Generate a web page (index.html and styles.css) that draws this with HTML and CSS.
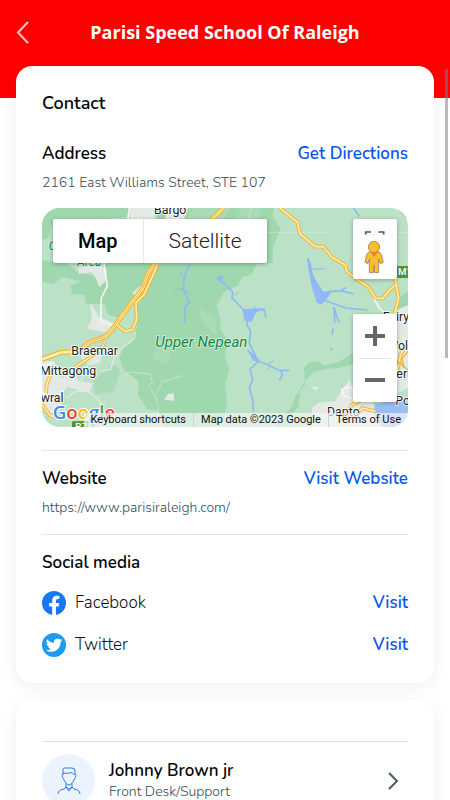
FILE: index.html
```html
<!DOCTYPE html>
<html lang="en">
<head>
<meta charset="utf-8">
<meta name="viewport" content="width=device-width, initial-scale=1">
<title>Parisi Speed School Of Raleigh</title>
<link rel="stylesheet" href="styles.css">
</head>
<body>
<div class="app">
  <header class="topbar">
    <button class="back" type="button" aria-label="Back">
      <svg width="14" height="24" viewBox="0 0 14 24" fill="none" stroke="currentColor" stroke-width="2"><path d="M12 2 2 12.500l10 10.500"/></svg>
    </button>
    <h1 class="title">Parisi Speed School Of Raleigh</h1>
  </header>
  <main class="content">
    <section class="card contact">
      <h2 class="heading contact-title">Contact</h2>
      <div class="row">
        <h3 class="heading">Address</h3>
        <a class="action" href="#directions">Get Directions</a>
      </div>
      <p class="detail">2161 East Williams Street, STE 107</p>

      <div class="map">
        <svg class="map-art" viewBox="0 0 1098 657" preserveAspectRatio="xMidYMid slice" aria-hidden="true">
          <rect width="1098" height="657" fill="#bbe2c6"/>
          <g fill="#9fd7ae">
            <path d="M0 0H270L250 28 120 36 104 70 28 52 18 92 0 96ZM0 158H64L104 190 160 206 176 178 200 160H340L300 230 270 268 230 330 196 318 190 290 130 286 128 262 90 258 86 232 118 220 60 208 34 228 0 222Z"/>
            <path d="M345 0H696L692 24 716 62 694 112 692 164 644 168 628 200 600 208 588 232 548 250 524 290 534 330 536 364 558 400 548 444 562 486 548 530 556 580 540 657H368L350 610 316 604 288 560 290 520 246 486 232 450 244 420 274 400 286 350 276 320 300 270 344 160Z"/>
            <path d="M786 480 800 464 826 460 846 472 890 462 940 430V466L900 478 850 484 816 490 794 512 774 544 770 596 746 620 742 657H700L722 620 748 600 760 564 790 530Z"/>
            <path d="M1098 250 1070 270 1064 318 1098 300ZM1064 0h34v40Z"/>
          </g>
          <g fill="#aadbb7">
            <path d="M460 0H560L530 34H430ZM600 0h60l-10 34h-70Z"/>
            <path d="M350 390l40 20-10 60-50-20ZM470 300l50 30 4 50-40-30Z"/>
            <path d="M210 470 236 482 216 550 160 562 154 520Z"/>
          </g>
          <g fill="#e3e9e5">
            <path d="M144 290h6l20 36 46 20-18 28-62-12 14-30ZM108 180l60-18 26 24-4 34-18 18-10-26-12-20-40 6ZM270 256l24-22 12 8-16 26ZM366 576l12-18 18-2v22ZM806 536h24l-8 14Z"/>
            <path d="M0 456 38 462 60 510 90 476 110 520 154 526 140 554 116 550 76 536 54 564 64 600 22 620 0 604Z"/>
            <path d="M120 430 180 424 176 462 146 472 118 454ZM810 600 830 584 880 580 900 546 924 512 936 560 990 580 1020 657H810ZM1056 310 1098 292V540L1058 560ZM374 0h64l-12 34h-56ZM262 0h74v34h-70Z"/>
          </g>
          <path d="M1000 590 1050 576 1098 578V657H1020L994 612Z" fill="#99bdf8"/>
          <g fill="none" stroke="#d7e9df" stroke-width="2"><path d="M680 74H860M992 74H1098M628 0 618 34M560 0 540 34"/></g>
          <g fill="none" stroke="#8fb8f6" stroke-width="5" stroke-linejoin="round">
            <path d="M448 160 432 192 426 214 424 244 434 266 440 284 428 300 430 344"/>
            <path d="M798 152 804 184 812 204 822 240 834 262 850 278 912 300 976 306M836 256 866 250 898 248 912 238M898 248 934 258M876 296 884 326 892 344M876 300 878 346M874 360l-4 20M866 420l4 8M934 0l18 24"/>
            <path d="M524 210 548 228 572 252 570 270 600 300 622 320 640 308 666 304 672 330M622 320 614 350 626 370 622 406 636 434 648 460 624 484 632 514 622 540 632 574 634 610M648 460 678 470 708 486 742 488M714 486 722 500 712 516"/>
          </g>
          <g fill="none" stroke="#8fb8f6" stroke-width="3" stroke-linejoin="round"><path d="M424 244 402 244 390 250M440 284 454 290M424 200 414 192M430 246 448 262M810 184 850 182M578 262l12-10M608 320l-4 20M640 304l-4-12M626 370l-10-18M678 470l18-12M684 474l-8 12"/></g>
          <path d="M794 146 806 162 814 204 834 236 846 256 868 252 856 270 838 290 824 284 818 264 808 230 800 190ZM600 304l66-4-24 14-14 28-18-4ZM614 422l24 18 18 22-22-4ZM530 202l16 2-6 18-14-8Z" fill="#8fb8f6"/>
          <g fill="none" stroke="#dce9e1" stroke-width="4" stroke-linejoin="round">
            <path d="M280 372 278 390 240 420 216 450 206 484 172 490M150 530 132 546 96 552 74 570M116 512 132 544 168 574 186 600M144 456 120 512"/>
            <path stroke-width="2" d="M250 500 264 492 324 498 332 524 318 530 340 564 350 600 344 620M342 556 360 522 424 502"/>
          </g>
          <g fill="none" stroke="#f7f7f1" stroke-width="5" stroke-linejoin="round"><path d="M262 0 258 34M186 166 196 234 178 270 176 340 206 350 232 356M994 270 1012 300 1030 318"/></g>
          <g fill="none" stroke-linejoin="round">
            <path stroke="#f1b336" stroke-width="15" d="M544 0 510 34 480 58M346 156 318 196 302 242 272 280 238 326 210 366 190 386 144 402 110 430 54 434 0 454"/>
            <path stroke="#fff1a8" stroke-width="8" d="M544 0 510 34 480 58M346 156 318 196 302 242 272 280 238 326 210 366 190 386 144 402 110 430 54 434 0 454"/>
            <path stroke="#f1b336" stroke-width="3" d="M544 0 510 34 480 58M346 156 318 196 302 242 272 280 238 326 210 366 190 386 144 402 110 430"/>
            <path stroke="#f1b336" stroke-width="11" d="M714 0 750 30 766 42 774 78 820 116 844 116 870 148 910 172 914 190 960 224 980 238 1000 270 1022 272 1040 248 1060 232M1058 206 1070 270 1058 318M346 170 322 226 306 260 282 284 284 336 272 364 250 370 226 352M188 402 176 426 102 476M32 482 14 530 12 560M0 590 24 622 60 632M900 640 930 590 970 570M1000 610 960 600 930 640M1098 400 1076 440 1066 490"/>
            <path stroke="#fff0a8" stroke-width="5" d="M714 0 750 30 766 42 774 78 820 116 844 116 870 148 910 172 914 190 960 224 980 238 1000 270 1022 272 1040 248 1060 232M1058 206 1070 270 1058 318M346 170 322 226 306 260 282 284 284 336 272 364 250 370 226 352M188 402 176 426 102 476M32 482 14 530 12 560M0 590 24 622 60 632M900 640 930 590 970 570M1000 610 960 600 930 640M1098 400 1076 440 1066 490"/>
            <path stroke="#f1b336" stroke-width="4" d="M1098 430 1080 452 1086 480M1098 486 1066 460"/>
            <path stroke="#f8f8f5" stroke-width="5" d="M930 570 906 564 898 546 918 538 936 540M0 476 34 462M0 552 22 566"/>
          </g>
          <g fill="#4f9339"><rect x="1064" y="174" width="70" height="36" rx="4"/><rect x="90" y="640" width="66" height="34" rx="3"/></g>
          <g class="shield"><text x="1068" y="202">M1</text><text x="100" y="666">R78</text></g>
          <g class="park-label"><text x="20" y="126">C</text><text x="106" y="174">Area</text><text class="park-large" x="340" y="418">Upper Nepean</text></g>
          <g class="place">
            <text x="336" y="17">Bargo</text><text x="88" y="442">Braemar</text><text x="-6" y="501">Mittagong</text><text x="-4" y="583">wral</text>
            <text x="1022" y="338">Fairy</text><text x="1036" y="426">Wollo</text><text x="1039" y="510">Cerrin</text><text x="1060" y="592">Port</text><text x="855" y="624">Dapto</text>
          </g>
          <g class="logo"><text x="32" y="633"><tspan fill="#4285f4">G</tspan><tspan fill="#ea4335">o</tspan><tspan fill="#fbbc05">o</tspan><tspan fill="#4285f4">g</tspan><tspan fill="#34a853">l</tspan><tspan fill="#ea4335">e</tspan></text></g>
        </svg>
        <div class="map-types">
          <button class="type selected" type="button">Map</button>
          <button class="type" type="button">Satellite</button>
        </div>
        <button class="map-control view-tools" type="button" aria-label="Street View">
          <svg width="44" height="60" viewBox="0 0 132 180">
            <path d="M38 47V39H54M76 39H92V47" fill="none" stroke="#555" stroke-width="5"/>
            <path d="M0 46H132" stroke="#eee" stroke-width="1"/>
            <g fill="#fbbc2e" stroke="#73715f" stroke-width="2"><path d="M47 99H79L85 106 91 130 82 134 77 121V161H65L63 139 61 161H49V121L44 134 36 130 41 106Z"/><circle cx="63" cy="84" r="17"/></g>
            <path d="M53 99H75L63 114Z" fill="#df8734"/>
          </svg>
        </button>
        <div class="map-control zoom">
          <button type="button" aria-label="Zoom in"><svg width="20" height="20" viewBox="0 0 20 20"><path d="M10 0v20M0 10h20" stroke="#666" stroke-width="4"/></svg></button>
          <button type="button" aria-label="Zoom out"><svg width="20" height="20" viewBox="0 0 20 20"><path d="M0 10h20" stroke="#666" stroke-width="4"/></svg></button>
        </div>
        <div class="credits"><a href="#shortcuts">Keyboard shortcuts</a><span>Map data ©2023 Google</span><a href="#terms">Terms of Use</a></div>
      </div>

      <div class="block">
        <div class="row"><h3 class="heading">Website</h3><a class="action" href="#website">Visit Website</a></div>
        <p class="detail">https://www.parisiraleigh.com/</p>
      </div>
      <div class="block social">
        <h3 class="heading">Social media</h3>
        <div class="row network">
          <svg width="24" height="24" viewBox="0 0 24 24" aria-hidden="true"><circle cx="12" cy="12" r="12" fill="#1877f2"/><path fill="#fff" d="M16.700 15.500 17.200 12h-3.300V9.800c0-1 .5-1.900 2-1.900h1.500v-3s-1.400-.2-2.700-.2c-2.800 0-4.500 1.700-4.500 4.700V12h-3v3.500h3V24h3.700v-8.500Z"/></svg>
          <span>Facebook</span><a class="action" href="#facebook">Visit</a>
        </div>
        <div class="row network">
          <svg width="24" height="24" viewBox="0 0 24 24" aria-hidden="true"><circle cx="12" cy="12" r="12" fill="#1d9bf0"/><path fill="#fff" transform="translate(4 4) scale(.68)" d="M23.950 4.570a10 10 0 0 1-2.820.77 4.960 4.960 0 0 0 2.160-2.720c-.95.55-2 .95-3.130 1.180a4.920 4.920 0 0 0-8.380 4.480C7.690 8.100 4.070 6.130 1.640 3.160a4.920 4.920 0 0 0 1.520 6.570 4.900 4.900 0 0 1-2.230-.61v.06a4.920 4.920 0 0 0 3.950 4.830 5 5 0 0 1-2.210.08 4.940 4.940 0 0 0 4.600 3.420A9.870 9.870 0 0 1 0 19.540a14 14 0 0 0 7.550 2.210c9.050 0 14-7.500 14-13.980 0-.21 0-.42-.02-.63a9.940 9.940 0 0 0 2.420-2.570Z"/></svg>
          <span>Twitter</span><a class="action" href="#twitter">Visit</a>
        </div>
      </div>
    </section>
    <section class="card staff">
      <a class="person" href="#staff">
        <span class="avatar"><svg width="24" height="28" viewBox="0 0 24 28" fill="none" stroke="#2f78e8" stroke-width="1"><path d="M6 8V2.500Q6 1 7.500 1H15Q18 1 18 4V8M6 6Q11 7 15 5.500L17.500 8M6 7Q4.500 8 5.500 10.500L6.500 12Q7.500 15 10.500 17.500Q12 18.500 13.500 17.500Q16.500 15 17.500 12L18.500 10.500Q19.500 8 18 7M9 16.500V20L12 24 15 20V16.500M9 20 7 22 3.500 23Q1 24 1 27M15 20 17 22 20.500 23Q23 24 23 27M9 20 12 22 15 20"/></svg></span>
        <span class="person-text"><strong>Johnny Brown jr</strong><span>Front Desk/Support</span></span>
        <svg width="12" height="18" viewBox="0 0 12 18" fill="none" stroke="#485c66" stroke-width="2"><path d="m2 1 8 8-8 8"/></svg>
      </a>
    </section>
  </main>
  <div class="scroll-thumb"></div>
</div>
</body>
</html>
```

FILE: styles.css
```css
* { box-sizing: border-box; }
body { margin: 0; background: #fff; color: #050708; font-family: Nunito, Lato, sans-serif; }
h1, h2, h3, p { margin: 0; }
a { color: inherit; text-decoration: none; }
button { padding: 0; border: 0; background: none; font: inherit; color: inherit; }
svg { display: block; flex: none; }
.app { position: relative; height: 100vh; overflow: hidden; }
.topbar { height: 98px; padding: 16px; display: flex; align-items: flex-start; background: #f00; color: #fff; }
.back { width: 14px; height: 32px; display: flex; align-items: center; color: #ffc4c4; }
.title { flex: 1; padding-right: 14px; text-align: center; font: 700 18px/32px "Open Sans", sans-serif; }
.content { position: relative; margin-top: -32px; padding: 0 16px; display: flex; flex-direction: column; gap: 17px; }
.card { padding: 25px 26px 26px; border-radius: 16px; background: #fff; box-shadow: 0 4px 16px rgba(30, 30, 50, .07); }
.heading, .action { font-size: 17px; line-height: 24px; font-weight: 600; }
.contact-title { margin-bottom: 27px; font-size: 18px; }
.row { display: flex; align-items: center; justify-content: space-between; }
.action { color: #0a56f0; }
.detail { margin-top: 7px; font-size: 14px; line-height: 20px; font-weight: 300; color: #344b56; }
.map { position: relative; height: 219px; margin: 15px 0 23px; border-radius: 18px; overflow: hidden; font-family: Roboto, sans-serif; }
.map-art { width: 100%; height: 100%; }
.place { font: 400 37px Roboto, sans-serif; fill: #222; stroke: #fff; stroke-width: 5px; paint-order: stroke; }
.park-label { font: italic 400 36px Roboto, sans-serif; fill: #188242; stroke: #d9f1df; stroke-width: 5px; paint-order: stroke; }
.park-large { font-size: 45px; }
.shield { font: 500 29px Roboto, sans-serif; fill: #fff; }
.logo { font: 600 56px "Open Sans", sans-serif; stroke: #fff; stroke-width: 6px; paint-order: stroke; }
.map-types { position: absolute; top: 11px; left: 11px; display: flex; height: 44px; border-radius: 2px; background: #fff; box-shadow: 0 1px 4px rgba(0, 0, 0, .3); }
.type { padding: 0 25px; font-size: 21px; font-weight: 300; color: #222; }
.type.selected { border-right: 1px solid #e8e8e8; font-size: 20px; font-weight: 500; color: #000; }
.map-control { position: absolute; right: 11px; width: 44px; border-radius: 2px; background: #fff; box-shadow: 0 1px 4px rgba(0, 0, 0, .3); }
.view-tools { top: 11px; height: 60px; }
.zoom { top: 106px; height: 88px; display: flex; flex-direction: column; align-items: center; }
.zoom button { width: 32px; flex: 1; display: flex; align-items: center; justify-content: center; }
.zoom button + button { border-top: 1px solid #e6e6e6; }
.credits { position: absolute; right: 0; bottom: 0; height: 14px; display: flex; font-size: 11px; line-height: 14px; color: #111; background: rgba(245, 245, 245, .7); white-space: nowrap; }
.credits > * { padding: 0 7px; }
.credits > * + * { border-left: 1px solid #ccd4ce; }
.block { padding-top: 16px; margin-bottom: 16px; border-top: 1px solid #e3e5e5; }
.social { margin-bottom: 0; }
.network { margin-top: 16px; gap: 9px; font-size: 17px; line-height: 24px; font-weight: 300; color: #0c1215; }
.network + .network { margin-top: 18px; }
.network .action { margin-left: auto; }
.staff { padding-top: 41px; }
.person { display: flex; align-items: center; padding: 12px 9px 12px 0; border-top: 1px solid #dfe2e2; }
.avatar { width: 53px; height: 53px; border-radius: 50%; display: grid; place-items: center; background: #edf3fe; }
.person-text { flex: 1; margin-left: 14px; display: flex; flex-direction: column; font-size: 14px; line-height: 20px; font-weight: 300; color: #344b56; }
.person-text strong { font-size: 17px; line-height: 22px; font-weight: 600; color: #050708; }
.scroll-thumb { position: absolute; top: 69px; right: 2px; width: 3px; height: 289px; background: rgba(125, 125, 125, .55); }
```
